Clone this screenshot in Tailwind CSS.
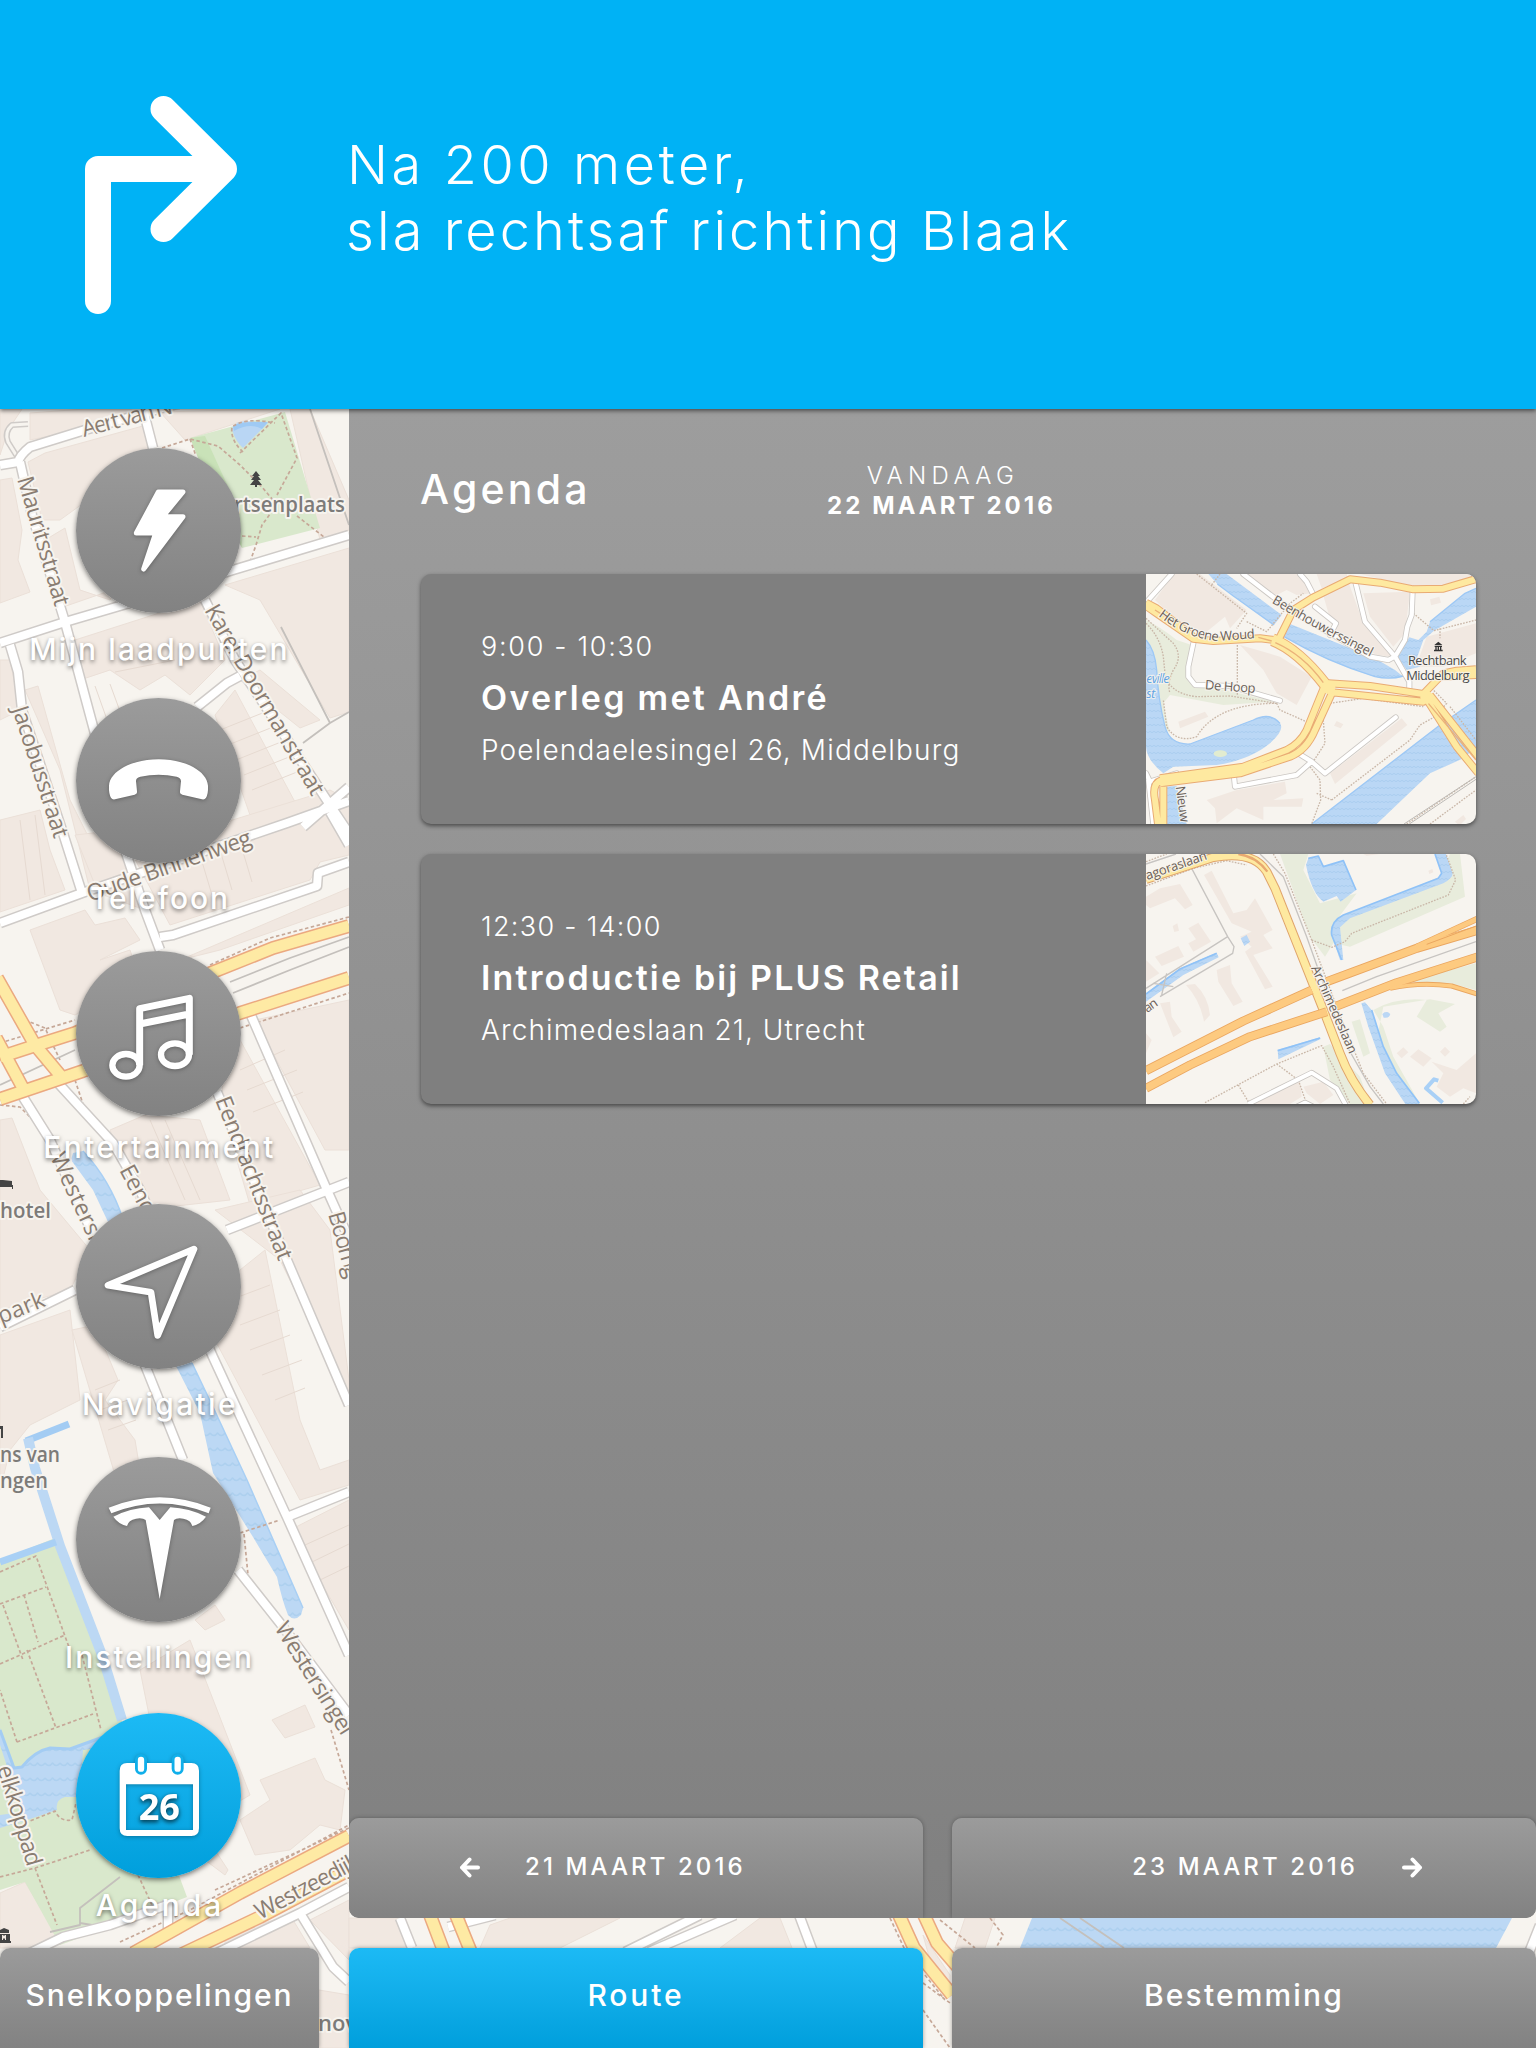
<!DOCTYPE html>
<html lang="nl">
<head>
<meta charset="utf-8">
<title>Agenda</title>
<script src="https://cdn.jsdelivr.net/npm/@tailwindcss/browser@4"></script>
</head>
<body class="bg-[#f7f4ef]">
<div class="relative w-[1536px] h-[2048px] overflow-hidden flex flex-col text-white font-['Inter',sans-serif]">

  <!-- street map -->
  <svg class="absolute inset-0 w-full h-full" viewBox="0 0 1536 2048" fill="none" stroke-linecap="butt" stroke-linejoin="round" font-family="Open Sans, Noto Sans, sans-serif">
    <defs>
      <pattern id="w" width="15" height="15" patternUnits="userSpaceOnUse"><rect width="15" height="15" fill="#bcd8f4"/><path d="M0 8q4 5 7.500 0q4 5 7.500 0" stroke="#add0ef" stroke-width="1.500"/></pattern>
      <g id="streets">
        <path d="M0 465 18 462Q20 455 30 447L85 430 180 403"/>
        <path d="M143 409 153 448M20 462 32 515 65 622 98 745 125 850 145 910 160 950M0 643 65 622 123 605 233 570 349 535M10 645 18 672 22 710 62 830 82 893 0 923M82 893 287 823 349 801M205 600 235 660 330 805 360 850M197 707 227 683 240 676M160 937 173 935 317 886 318 873 349 862M330 812 349 845M303 827 349 787"/>
        <path d="M250 1013 327 1190 345 1230M349 1182 227 1230M217 1092 287 1260 349 1405M58 1083 113 1143 140 1190 213 1357 287 1517 349 1655M23 1097 50 1140 100 1250 147 1370 183 1460M0 1327 75 1290M287 1517 349 1492M238 1570 280 1623 349 1715M30 1953 63 1937 110 1925 167 1905M168 1900V1930M217 1953 300 1913 349 1887M300 1913 333 1967 349 1982"/>
        <path d="M400 1918 412 1948M448 1927 495 1915M625 1952 700 1915M649 1952 735 1915M798 1912 813 1952M1526 1960 1540 1925"/>
      </g>
      <path id="avenues" d="M0 1099 83 1071 240 1013 349 978M0 1057 37 1045 75 1033 213 972 273 948 349 926M-3 978 35 1045 60 1075M-4 1038 24 1090M133 1953 240 1893 349 1836M180 1955 260 1917 349 1870M430 1915 444 1952M456 1915 471 1952M899 1915 914 1948 952 1995M924 1915 937 1943 962 1972"/>
    </defs>
    <!-- buildings -->
    <g fill="#f1e8e1" stroke="#ebe0d8" stroke-width="1">
      <path d="M28 462 45 453 150 424 150 455 60 520 42 520zM0 409h22L8 430 0 455zM30 413 85 409 180 409 30 440z"/>
      <path d="M160 412 280 409 185 440zM0 480 12 478 22 530 18 560 30 592 0 603z"/>
      <path d="M45 540 65 528 80 590 110 600 118 588 66 606zM290 409 310 409 349 500 349 530 320 540z"/>
      <path d="M225 585 349 548 349 712 330 718 260 600z"/>
      <path d="M75 640 200 600 225 660 190 695 165 675 140 690 110 670 80 680zM0 660 10 660 20 710 0 720z"/>
      <path d="M25 690 38 686 70 800 95 850 140 890 145 910 90 890 60 770z"/>
      <path d="M215 715 235 690 310 830 290 860 250 815zM240 680 260 670 320 720 300 728z"/>
      <path d="M0 820 40 810 50 850 65 890 0 912zM75 835 120 830 130 870 95 885z"/>
      <path d="M130 850 200 830 330 790 349 800 349 855 320 862 310 880 170 925z"/>
      <path d="M30 930 85 910 95 925 125 918 140 940 100 960 130 950 140 980 75 1015 60 1010z"/>
      <path d="M180 960 349 888 349 905 220 950zM255 1020 349 1000 349 1150 325 1150z"/>
      <path d="M220 1060 240 1040 320 1185 250 1205 225 1120zM110 1130 145 1115 200 1120 230 1200 140 1210z"/>
      <path d="M0 1120 12 1118 40 1190 90 1250 70 1290 0 1310zM0 1335 70 1310 80 1400 30 1425 10 1450 0 1490z"/>
      <path d="M72 1330 95 1325 118 1380 105 1400 135 1440 140 1470 115 1475z"/>
      <path d="M215 1210 300 1190 330 1230 349 1380 349 1400 280 1260zM240 1270 265 1250 300 1420 320 1470 349 1460 349 1485 300 1500 215 1340z"/>
      <path d="M290 1530 349 1500 349 1630zM195 1620 215 1605 225 1620 205 1630z"/>
      <path d="M140 1670 190 1640 250 1795 190 1830 150 1720z"/>
      <path d="M272 1720 305 1705 315 1727 285 1738zM260 1780 315 1758 325 1780 345 1790 340 1830 320 1825 290 1850 255 1855 240 1820 270 1800z"/>
      <path d="M215 1850 228 1870 225 1875 205 1860zM225 1935 290 1915 310 1948 225 1948zM310 1920 349 1900 349 1960z"/>
      <path d="M0 1893 25 1882 57 1935 30 1948 0 1948zM319 1990 349 1995 349 2048 319 2048z"/>
      <path d="M349 1918h48l12 30H349zM490 1925 510 1918 620 1918 560 1948 480 1948zM720 1948 760 1918 780 1918 792 1948zM965 1918h30l-10 30h-30zM923 1935 950 1975 950 1985 930 1960z"/>
    </g>
    <path d="M80 690l25 70M95 686l25 70M110 684l22 60M220 730l50-20M228 745l50-20M236 760l50-20M244 775l50-20M252 790l50-20M20 820l10 80M35 815l10 80M240 1070l45-20M247 1090l50-20M253 1112l50-20M150 1120l35 80M165 1120l35 80M230 1300l40-15M240 1325l40-15M250 1350l40-15M262 1375l40-15M275 1400l30-12M95 1390l25-10M100 1410l28-10M108 1430l28-10M305 1545l44-20M312 1562l37-18M320 1580l29-14M175 660l-60 12M200 855l12 40M220 850l12 40M240 842l12 40" stroke="#e6dad1"/>
    <!-- parks and water -->
    <path d="M190 438 285 412 320 528 242 548 230 490z" fill="#d9e8cc"/>
    <path d="M190 438 205 436 225 480 240 510 242 548 215 500z" fill="#c9e2b8"/>
    <path d="M232 430Q232 423 245 421L268 423 243 448Q236 442 232 430z" fill="#b9d6f4"/>
    <path d="M233 426Q240 421 268 422L262 429Q250 422 234 431z" fill="#9fcaf4"/>
    <path d="M0 1560 55 1538 60 1543 125 1730 187 1897 110 1927 60 1945 25 1882 0 1890z" fill="#d9e8cc"/>
    <path d="M0 1728 13 1767 22 1767Q32 1752 50 1748L70 1749 103 1736 98 1748 83 1750 80 1797 65 1797Q55 1800 57 1810L27 1820 0 1828V1815L22 1812 0 1745z" fill="url(#w)"/>
    <path d="M0 1730 14 1768 22 1767Q35 1751 50 1748L70 1749 103 1737" stroke="#a3ccf3" stroke-width="3"/>
    <path d="M73 1153 83 1151Q110 1180 123 1219L150 1290 192 1363 213 1407 247 1480 303 1608 301 1615Q294 1622 288 1615 282 1600 277 1577L253 1537 213 1473 200 1413 177 1368 140 1290 93 1190 71 1160z" fill="url(#w)"/>
    <path d="M83 1151Q110 1180 123 1219M192 1363 213 1407 247 1480 303 1608" stroke="#a8cff4" stroke-width="1.500"/>
    <path d="M69 1424 26 1441" stroke="#a3ccf3" stroke-width="7"/>
    <path d="M28 1438 35 1468 60 1546 102 1655 122 1720" stroke="#bcd8f4" stroke-width="10"/>
    <path d="M0 1562 56 1542" stroke="#a9d0f5" stroke-width="7"/>
    <path d="M1032 1918H1512L1496 1948H1020z" fill="url(#w)"/>
    <!-- footpaths -->
    <path d="M162 448 190 439 218 446 240 465 262 487 273 500M190 439 196 456M240 453 281 413 297 458 277 495M243 452Q230 440 232 427 245 417 275 423M273 510 262 525 256 545 250 562M242 536 256 537M297 516 324 537M210 965 270 938 349 917M240 1028 290 1012 349 993M0 1043 75 1020M25 1020 45 1028 60 1060M75 1080 85 1110M0 1105 20 1107 38 1125M0 1572 36 1556 70 1650M0 1604 46 1587M24 1595 38 1642M3 1605 23 1660M0 1664 65 1635M27 1650 56 1728M17 1742 0 1690M17 1742 93 1714M82 1655 101 1730M25 1823 55 1811Q60 1822 72 1820L76 1803M0 1877 35 1868 90 1850M35 1868 57 1925M138 1875 152 1905M240 1533 280 1520M244 1534 248 1575M331 1730 349 1790M120 1942 190 1910 349 1825M215 1890 349 1828M890 1918 905 1950M940 1920 975 1948M923 2010 950 2048M925 1975 945 2000M923 1983 950 2003M990 1918 1003 1935 996 1948" stroke="#c6a898" stroke-width="1.700" stroke-dasharray="3.500 2.500"/>
    <!-- rails and lanes -->
    <path d="M281 627 330 723 349 712M330 723 303 743M310 409 349 525M0 1085 75 1050M230 982 290 958 349 937M233 993 290 970 349 947M120 1877 80 1908V1925L50 1932M80 1923 110 1928M1060 1918 1104 1948M1080 1918 1124 1948" stroke="#c4c0bc" stroke-width="1.800"/>
    <path d="M28 424 12 425Q4 432 8 442L18 458" stroke="#cfcbc8" stroke-width="6"/>
    <path d="M28 424 12 425Q4 432 8 442L18 458" stroke="#f7f4ef" stroke-width="3"/>
    <!-- roads -->
    <use href="#streets" stroke="#cfcbc8" stroke-width="11"/>
    <use href="#streets" stroke="#fff" stroke-width="8"/>
    <use href="#avenues" stroke="#eba980" stroke-width="14"/>
    <use href="#avenues" stroke="#feeaa4" stroke-width="11"/>
    <!-- map labels -->
    <g font-size="23" fill="#8a7d72" stroke="#f7f4ef" stroke-width="4" paint-order="stroke">
      <text transform="translate(84 437) rotate(-15)" textLength="93">Aert van N</text>
      <text transform="translate(17 479) rotate(73.500)" textLength="134">Mauritsstraat</text>
      <text transform="translate(204 610) rotate(60)" textLength="216">Karel Doormanstraat</text>
      <text transform="translate(12 709) rotate(72)" textLength="137">Jacobusstraat</text>
      <text transform="translate(90 902) rotate(-19.500)" textLength="173">Oude Binnenweg</text>
      <text transform="translate(215 1100) rotate(68.500)" textLength="174">Eendrachtsstraat</text>
      <text transform="translate(50 1157) rotate(65)" textLength="140">Westersingel</text>
      <text transform="translate(119 1170) rotate(62)" textLength="160">Eendrachtsweg</text>
      <text transform="translate(328 1214) rotate(74)" textLength="68">Boomg</text>
      <text transform="translate(1 1324) rotate(-22)" textLength="49">park</text>
      <text transform="translate(274 1628) rotate(58)" textLength="128">Westersingel</text>
      <text transform="translate(-3 1768) rotate(73)" textLength="104">elkkoppad</text>
      <text transform="translate(260 1920) rotate(-28)" textLength="115">Westzeedijk</text>
    </g>
    <g font-size="22" fill="#7d7b79" stroke="#f7f4ef" stroke-width="4" paint-order="stroke" font-weight="600">
      <text x="234" y="512" textLength="111" lengthAdjust="spacingAndGlyphs">rtsenplaats</text>
      <text x="0" y="1218" textLength="51" lengthAdjust="spacingAndGlyphs">hotel</text>
      <text x="0" y="1462" textLength="60" lengthAdjust="spacingAndGlyphs">ns van</text>
      <text x="0" y="1488" textLength="48" lengthAdjust="spacingAndGlyphs">ngen</text>
      <text x="318" y="2031">nov</text>
    </g>
    <g fill="#444">
      <path d="M256 471l4 5h-2l3 4h-3l4 5h-5v2h-2v-2h-5l4-5h-3l3-4h-2z"/>
      <path d="M0 1180h3l9 1v5H0zM0 1185h13v4h-1v-2H0zM0 1426h3v12H1v-9H0z"/>
      <path fill-rule="evenodd" d="M0 1930l4-2 5 2v3H0zM0 1934h10v7h1v2H0zM2 1940h1v-2l1 1 1-1v2h1v-5H5l-1 1-1-1H2z"/>
    </g>
  </svg>

  <!-- route instruction -->
  <header class="relative z-20 h-[409px] shrink-0 bg-[#00b2f5] shadow-[0_2px_4px_rgba(0,0,0,0.5)] flex items-start">
    <div class="w-[345px] pt-[95px] pl-[85px]">
      <svg class="w-[153px] h-[219px]" viewBox="85 95 153 219" fill="none" stroke="#fff" stroke-width="26" stroke-linecap="round" stroke-linejoin="round"><path d="M98 301V169H224M163.500 109 224 169 163.500 229"/></svg>
    </div>
    <p class="pt-[132px] text-[54px] leading-[66px] font-[340] whitespace-nowrap"><span class="tracking-[3.6px] pl-[2px]">Na 200 meter,</span><br><span class="tracking-[3.1px] pl-px">sla rechtsaf richting Blaak</span></p>
  </header>

  <div class="relative flex-1 flex min-h-0">
    <!-- shortcuts -->
    <nav class="w-[349px] shrink-0 pt-[39px]">
      <ul class="w-[317px] flex flex-col items-center text-[30px] leading-[36px] font-medium [text-shadow:0_2px_4px_rgba(0,0,0,0.5)]">
        <li class="h-[250px] flex flex-col items-center">
          <div class="size-[165px] rounded-full bg-linear-to-b from-[#9b9b9b] to-[#828282] shadow-[0_2px_5px_rgba(0,0,0,0.5)]">
            <svg class="size-full drop-shadow-[0_1px_2px_rgba(0,0,0,0.3)]" viewBox="228 144 495 495"><path d="M475 276H549L488 350H549L431 507 467 399H409z" fill="#fff" stroke="#fff" stroke-width="15" stroke-linejoin="round"/></svg>
          </div>
          <span class="mt-[18px] pl-[2px] tracking-[2.1px]">Mijn laadpunten</span>
        </li>
        <li class="h-[253px] flex flex-col items-center">
          <div class="size-[165px] rounded-full bg-linear-to-b from-[#9b9b9b] to-[#828282] shadow-[0_2px_5px_rgba(0,0,0,0.5)]">
            <svg class="size-full drop-shadow-[0_1px_2px_rgba(0,0,0,0.3)]" viewBox="228 895 495 495"><path d="M327 1158C330 1115 395 1079 476 1079S621 1115 624 1158Q625 1182 618 1194 614 1201 606 1199L547 1185Q539 1183 540 1175L543 1145Q543 1134 530 1131 476 1120 421 1131 407 1134 408 1145L411 1175Q412 1183 404 1185L345 1199Q337 1201 333 1194 326 1182 327 1158z" fill="#fff"/></svg>
          </div>
          <span class="mt-[17px] pl-[3px] tracking-[1.9px]">Telefoon</span>
        </li>
        <li class="h-[253px] flex flex-col items-center">
          <div class="size-[165px] rounded-full bg-linear-to-b from-[#9b9b9b] to-[#828282] shadow-[0_2px_5px_rgba(0,0,0,0.5)]">
            <svg class="size-full drop-shadow-[0_1px_2px_rgba(0,0,0,0.3)]" viewBox="228 393 495 495" fill="none" stroke="#fff" stroke-width="21" stroke-linejoin="round"><path d="M419 736V566L568 535V704M419 612 568 582"/><ellipse cx="378" cy="736" rx="41" ry="34" stroke-width="19"/><ellipse cx="525" cy="704" rx="42" ry="34" stroke-width="19"/></svg>
          </div>
          <span class="mt-[13px] pl-[2px] tracking-[2.4px]">Entertainment</span>
        </li>
        <li class="h-[253px] flex flex-col items-center">
          <div class="size-[165px] rounded-full bg-linear-to-b from-[#9b9b9b] to-[#828282] shadow-[0_2px_5px_rgba(0,0,0,0.5)]">
            <svg class="size-full drop-shadow-[0_1px_2px_rgba(0,0,0,0.3)]" viewBox="228 -108 495 495" fill="none" stroke="#fff" stroke-width="20" stroke-linejoin="round"><path d="M582 27 324 136 453 157 473 286z"/></svg>
          </div>
          <span class="mt-[17px] pl-[3px] tracking-[2.3px]">Navigatie</span>
        </li>
        <li class="h-[256px] flex flex-col items-center">
          <div class="size-[165px] rounded-full bg-linear-to-b from-[#9b9b9b] to-[#828282] shadow-[0_2px_5px_rgba(0,0,0,0.5)]">
            <svg class="size-full drop-shadow-[0_1px_2px_rgba(0,0,0,0.3)]" viewBox="228 651 495 495" fill="#fff"><path d="M326 803Q479 740 632 803L626 820Q479 761 334 820zM340 830Q390 805 447 802L479 840 511 802Q568 805 618 830 603 852 577 858 573 840 550 836 530 833 522 840L479 1077 437 840Q428 833 408 836 385 840 381 858 355 852 340 830z"/></svg>
          </div>
          <span class="mt-[17px] pl-[2px] tracking-[2px]">Instellingen</span>
        </li>
        <li class="flex flex-col items-center">
          <div class="size-[165px] rounded-full bg-linear-to-b from-[#1cbaf5] to-[#009fdc] shadow-[0_2px_5px_rgba(0,0,0,0.5)]">
            <svg class="size-full drop-shadow-[0_1px_2px_rgba(0,0,0,0.3)]" viewBox="228 219 495 495"><path fill-rule="evenodd" fill="#fff" d="M381 369H574Q597 369 597 392V565Q597 588 574 588H382Q359 588 359 565V392Q359 369 381 369zM378 433V570H579V433z"/><path d="M423 360V386M533 360V386" stroke="#10afea" stroke-width="36" stroke-linecap="round"/><path d="M423 360V386M533 360V386" stroke="#fff" stroke-width="19" stroke-linecap="round"/><text x="478" y="540" text-anchor="middle" textLength="124" lengthAdjust="spacingAndGlyphs" font-family="Open Sans, sans-serif" font-weight="700" font-size="105" fill="#fff">26</text></svg>
          </div>
          <span class="mt-[9px] pl-[3px] tracking-[2.9px]">Agenda</span>
        </li>
      </ul>
    </nav>

    <!-- agenda panel -->
    <main class="flex-1 h-[1509px] flex flex-col rounded-b-[10px] overflow-hidden bg-linear-to-b from-[#9d9d9d] to-[#808080]">
      <div class="grid grid-cols-[1fr_auto_1fr] h-[165px] shrink-0">
        <h1 class="pt-[56px] pl-[71px] text-[41px] leading-[48px] font-medium tracking-[3.2px]">Agenda</h1>
        <div class="pt-[52px] -ml-[3px] flex flex-col items-center text-[24px] leading-[30px]">
          <span class="font-[340] tracking-[5.3px] pl-[4px]">VANDAAG</span>
          <span class="font-bold tracking-[3.05px] pl-px">22 MAART 2016</span>
        </div>
      </div>

      <section class="pl-[72px] pr-[60px] flex flex-col gap-[30px]">
        <article class="h-[250px] flex rounded-[10px] overflow-hidden bg-[#7f7f7f] shadow-[0_2px_4px_rgba(0,0,0,0.5)]">
          <div class="flex-1 pt-[48px] pl-[60px] whitespace-nowrap font-[340]">
            <p class="text-[27px] leading-[50px] tracking-[1.7px]">9:00 - 10:30</p>
            <h2 class="-mt-px text-[34px] leading-[54px] font-semibold tracking-[2.27px]">Overleg met André</h2>
            <p class="text-[28px] leading-[50px] tracking-[1.15px]">Poelendaelesingel 26, Middelburg</p>
          </div>
          <svg class="w-[330px] h-[250px] shrink-0 bg-[#f7f4ef]" viewBox="48 42 990 750" fill="none" stroke-linejoin="round" font-family="Open Sans, Noto Sans, sans-serif">
            <defs>
              <pattern id="w3" width="24" height="42" patternUnits="userSpaceOnUse"><rect width="24" height="42" fill="#bad7f5"/><path d="M0 10q6 8 12 0q6 8 12 0M0 31q6 8 12 0q6 8 12 0" stroke="#abceef" stroke-width="3"/></pattern>
              <path id="lanes" d="M55 120 125 42M340 42 480 150 720 290 775 300 795 290M510 42 530 65 548 100M555 140 618 190 600 225M677 70 705 185 795 290 838 365V385M848 90 845 165 832 200 825 240 795 290M190 250 175 320V350L195 375 300 378 450 422M545 605 585 640 797 472M488 570 545 605 500 645 315 680 312 650M55 660 70 792M48 640 60 665 140 640"/>
              <g id="mains">
                <path d="M445 240 490 150 550 112 660 58 750 68 850 88 940 86 1045 55M595 370 720 378 880 402 940 340 980 332 1038 328M605 397 880 425 900 400M930 350 1040 345M885 410 980 560 1045 640M900 405 1045 590M585 375 530 510Q510 550 470 570L340 620 90 655M610 390 555 510Q530 570 480 590L330 640 90 670M95 660Q65 670 75 720L85 800M100 680 100 800"/>
                <path d="M48 138 80 160 190 236 250 243 390 235 435 240M48 128 80 145 190 230M430 232Q510 265 590 368M425 246Q500 275 582 380"/>
              </g>
            </defs>
            <g fill="#f1e8e1">
              <path d="M130 42H210L350 150 300 205 285 170 230 215 160 205 75 120zM350 42H520L545 100 500 105 470 90 430 110zM560 42H650L655 55 575 85zM690 42H1038V55L930 80 850 80zM575 90 655 65 700 190 790 290 740 285 610 210zM700 100 840 95 825 220 790 260 720 170zM600 640 815 475 832 495 615 672zM330 255 450 290 545 350 500 435 440 400 400 330zM865 300 890 230 1038 190V280L940 320 870 320zM230 720 320 690 465 665 470 700 430 720 520 715 515 740 400 740 400 780 320 745 260 790 255 745zM145 485 225 455 235 470 150 505zM900 118l28-8 5 18-30 8zM975 785l25-20 8 12-20 20zM620 483l20 10-8 12-20-8z"/>
            </g>
            <path d="M48 180Q90 200 140 240L185 255 170 350 200 370 430 425 280 435 120 405 100 430 120 520 100 500 70 300 48 240z" fill="#e8ecdc"/>
            <g fill="url(#w3)">
              <path d="M235 42 290 42 455 165 432 195 310 108 262 72zM475 190 735 295 795 330 820 350Q780 360 735 350 590 305 462 230zM1038 85 1005 100 900 185 890 215 865 240 838 232 800 290 830 330 870 320 862 290 880 240 912 212 1038 140z"/>
              <path d="M48 240Q75 270 80 330 85 420 105 500 120 555 180 552L370 480Q420 455 450 490 465 510 420 550 360 600 260 615L130 620 100 640Q50 600 48 560zM105 680 140 678 170 792H110zM545 792 930 495 1038 420V560L1000 595 900 640 740 792z"/>
            </g>
            <path d="M262 72 310 108 432 195M462 230Q590 305 735 350 780 360 820 348M48 240Q75 270 80 330 85 420 105 500 120 555 180 552L370 480Q420 455 450 490M545 792 930 495 1038 420M900 185 1005 100 1038 85" stroke="#9dc8f5" stroke-width="4"/>
            <ellipse cx="271" cy="581" rx="20" ry="10" fill="#e2ecd0"/>
            <path d="M200 42 350 160 320 205M270 42 245 75M48 190Q90 230 100 290L105 340Q115 400 200 410L300 408 440 430M48 175 130 250Q160 290 130 330 110 370 120 400M322 255V405M440 430Q260 430 200 530 140 550 110 500L100 420M440 430 450 450 540 490M350 185 410 215 480 130 520 100M540 620 570 660 572 720 545 792M605 720 840 540 870 495 915 470 950 430 900 380 940 350M560 700 605 720M580 480 585 550 540 620M850 160 912 212 1038 180M930 205V235M960 440 1038 540M830 792 1038 650M900 792 1038 690M600 430 700 415 880 440" stroke="#c9b7a8" stroke-width="4" stroke-dasharray="5 4"/>
            <use href="#lanes" stroke="#cbc7c3" stroke-width="18" stroke-linecap="round"/>
            <use href="#lanes" stroke="#fff" stroke-width="13" stroke-linecap="round"/>
            <use href="#mains" stroke="#e9ab74" stroke-width="24"/>
            <use href="#mains" stroke="#fee9a0" stroke-width="18"/>
            <path d="M436 248Q520 285 580 368M385 232 425 243M895 430 1038 600M75 150 110 172" stroke="#eab27a" stroke-width="4"/>
            <circle cx="596" cy="382" r="20" fill="#fee9a0"/><circle cx="890" cy="412" r="19" fill="#fee9a0"/>
            <path d="M822 792 1038 650M838 792 1038 658" stroke="#bdbab6" stroke-width="3"/>
            <defs><path id="hg" d="M85 168Q170 235 260 243L400 233"/><path id="bh" d="M425 128Q570 215 745 302"/></defs>
            <g font-size="39" fill="#6a6058" stroke="#f7f4ef" stroke-opacity=".8" stroke-width="7" paint-order="stroke">
              <text textLength="308"><textPath href="#hg">Het Groene Woud</textPath></text>
              <text textLength="338"><textPath href="#bh">Beenhouwerssingel</textPath></text>
              <text transform="translate(224 388) rotate(4)" textLength="152">De Hoop</text>
              <text transform="translate(137 680) rotate(82)" textLength="109">Nieuw</text>
              <text x="922" y="316" text-anchor="middle" textLength="176" fill="#4a4a4a">Rechtbank</text>
              <text x="924" y="359" text-anchor="middle" textLength="190" fill="#4a4a4a">Middelburg</text>
              <text x="49" y="370" textLength="70" font-style="italic" fill="#5fa3e3">eville</text>
              <text x="49" y="415" textLength="27" font-style="italic" fill="#5fa3e3">st</text>
            </g>
            <path d="M913 255 925 245 937 255zM914 257h22v4h-22zM916 261h4v8h-4zM923 261h4v8h-4zM930 261h4v8h-4zM912 269h26v5h-26z" fill="#333"/>
          </svg>
        </article>

        <article class="h-[250px] flex rounded-[10px] overflow-hidden bg-[#7f7f7f] shadow-[0_2px_4px_rgba(0,0,0,0.5)]">
          <div class="flex-1 pt-[48px] pl-[60px] whitespace-nowrap font-[340]">
            <p class="text-[27px] leading-[50px] tracking-[1.3px]">12:30 - 14:00</p>
            <h2 class="-mt-px text-[34px] leading-[54px] font-semibold tracking-[2.15px]">Introductie bij PLUS Retail</h2>
            <p class="text-[28px] leading-[50px] tracking-[1.1px]">Archimedeslaan 21, Utrecht</p>
          </div>
          <svg class="w-[330px] h-[250px] shrink-0 bg-[#f7f4ef]" viewBox="48 42 990 750" fill="none" stroke-linejoin="round" font-family="Open Sans, Noto Sans, sans-serif">
            <defs>
              <path id="avenue" d="M48 118 250 52Q370 30 410 95L435 145 580 510 630 640Q660 720 720 795"/>
              <path id="motorway" d="M48 692 340 543 545 450M590 425 860 325 1045 270M48 745 180 675 360 590 590 515M620 498 800 428 1045 350"/>
              <path id="estate" d="M355 792 545 698 620 745 650 800M500 800 525 788 550 800"/>
            </defs>
            <g fill="#f1e8e1">
              <path d="M48 170 90 145 150 132 188 195 165 208 135 175 60 205 48 195zM222 105 245 92 310 220 350 210 375 175 428 270 400 285 428 325 370 345 428 440 405 448 345 335 365 320 330 290 365 275 305 250zM175 265 205 248 243 305 190 335 175 310 198 298zM75 350 145 318 162 350 95 378zM48 360 88 400 48 425zM128 258l14-8 5 22-14 4zM260 390 300 375 305 430 338 485 310 498 265 425zM168 435 195 432Q235 470 240 525L222 545Q210 480 168 435zM90 490 120 485 125 530 155 575 130 592zM48 580 65 600 48 640zM410 770 440 740 510 725 515 770 480 792 375 792zM520 740 580 725 610 765 570 792 530 760zM800 640l20-18 15 15-20 18zM840 650 865 628 905 655 880 680zM905 665 980 690 1038 640V760L1000 745 960 770 920 740 940 700zM930 635l15-15 15 15-15 15zM700 42h50l-40 5zM895 92l12-5 3 10-12 5z"/>
            </g>
            <g fill="#e8ecdc">
              <path d="M450 42H535L520 90 570 190 680 160 620 240 640 230 930 110 960 42H990L1005 170 660 320 610 310 585 350 540 290zM1038 370 830 425 960 430 1038 450zM730 510Q800 470 890 480L860 530 930 575 950 560 925 520 975 492 900 478 760 500 740 600 840 792H870L790 650 760 560zM580 620 600 612 690 710 720 792H660L600 720zM665 545 690 538 720 640 700 650z"/>
            </g>
            <g fill="url(#w3)">
              <path d="M535 55 565 48 580 80 640 62 678 150 632 185 620 168 580 185Q545 160 528 75z"/>
              <path d="M915 42H948L968 100Q968 115 940 130L660 235 630 262 640 360 630 360 605 285Q600 245 640 225L925 115 935 100zM332 295 350 285 360 305 343 318zM48 460 150 385 260 338 266 352 160 405 48 485zM443 630 570 592 572 597 445 658zM694 490 705 487 725 510 760 620 800 700 868 792H826L765 700 715 560zM757 522q12-12 24 0q-4 14-20 11z"/>
            </g>
            <path d="M915 42 935 100 925 115 640 225Q600 245 605 285L635 360M535 55 565 48 580 80 640 62 678 150M48 462 150 387 260 340M443 632 570 594M725 510 760 620 800 700 868 790" stroke="#8fc2f7" stroke-width="5"/>
            <path d="M925 722 912 718 888 745 938 788" stroke="#a9d0f6" stroke-width="12"/>
            <path d="M430 42 465 100 545 300 620 500 700 700 770 792M545 300 605 322 645 305 665 280 955 165 977 120 948 42M48 138 190 85 290 62 350 75M225 788 440 672 575 617 610 680 660 792M325 735 355 785M440 672 505 720 530 792M48 65 110 42M1000 792 1020 770" stroke="#c9b7a8" stroke-width="4" stroke-dasharray="5 4"/>
            <path d="M390 42 460 110 530 290 640 600 720 740 760 792M185 85 293 290 312 320 308 340 90 470M48 445 293 290M48 72 138 42M637 452 740 410 1038 305M70 430 130 440M110 400 95 465" stroke="#c7c4c1" stroke-width="4"/>
            <use href="#estate" stroke="#c9c5c1" stroke-width="17"/>
            <use href="#estate" stroke="#fff" stroke-width="12"/>
            <use href="#avenue" stroke="#e0a56c" stroke-width="28"/>
            <use href="#avenue" stroke="#fee9a0" stroke-width="22"/>
            <path d="M325 42Q380 50 412 95" stroke="#e8a870" stroke-width="7"/>
            <g stroke="#eaa660">
              <use href="#motorway" stroke-width="27"/><path stroke-width="18" d="M860 320 1045 235"/><path stroke-width="15" d="M780 445Q870 425 965 438L1045 463"/>
            </g>
            <g stroke="#fdca80">
              <use href="#motorway" stroke-width="22"/><path stroke-width="14" d="M860 320 1045 235"/><path stroke-width="10" d="M780 445Q870 425 965 438L1045 463"/>
            </g>
            <path d="M890 313 1038 258" stroke="#eaa660" stroke-width="3"/>
            <g font-size="39" fill="#6a6058" stroke="#f7f4ef" stroke-opacity=".85" stroke-width="7" paint-order="stroke">
              <text transform="translate(52 120) rotate(-19)" textLength="192">agoraslaan</text>
              <text transform="translate(52 519) rotate(-35)" textLength="42">an</text>
              <text transform="translate(543 384) rotate(66)" textLength="284">Archimedeslaan</text>
            </g>
          </svg>
        </article>
      </section>

      <div class="mt-auto flex gap-[29px] text-[24px] leading-[30px] font-medium">
        <button class="w-[574px] h-[100px] rounded-t-[10px] rounded-bl-[10px] pl-[110px] pb-[2px] flex items-center bg-linear-to-b from-[#9b9b9b] to-[#828282] shadow-[0_0_4px_rgba(0,0,0,0.3)]">
          <svg class="w-[22px] h-[21px]" viewBox="0 0 22 21" fill="none" stroke="#fff" stroke-width="4" stroke-linecap="round" stroke-linejoin="round"><path d="M19 10.500H3M10.500 2.500 3 10.500 10.500 18.500"/></svg>
          <span class="ml-[44px] tracking-[3.1px]">21 MAART 2016</span>
        </button>
        <button class="flex-1 h-[100px] rounded-[10px] rounded-bl-none pr-[113px] pb-[2px] flex items-center justify-end bg-linear-to-b from-[#9b9b9b] to-[#828282] shadow-[0_0_4px_rgba(0,0,0,0.3)]">
          <span class="tracking-[3.1px]">23 MAART 2016</span>
          <svg class="ml-[43px] w-[22px] h-[21px]" viewBox="0 0 22 21" fill="none" stroke="#fff" stroke-width="4" stroke-linecap="round" stroke-linejoin="round"><path d="M3 10.500H19M11.500 2.500 19 10.500 11.500 18.500"/></svg>
        </button>
      </div>
    </main>
  </div>

  <!-- bottom tabs -->
  <footer class="absolute bottom-0 inset-x-0 h-[100px] flex text-[30px] leading-[36px] font-medium">
    <button class="w-[319px] mr-[30px] pb-[6px] rounded-t-[10px] bg-linear-to-b from-[#9b9b9b] to-[#828282] shadow-[0_0_4px_rgba(0,0,0,0.35)] tracking-[1.95px]">Snelkoppelingen</button>
    <button class="w-[574px] mr-[29px] pb-[6px] rounded-t-[10px] bg-linear-to-b from-[#1cbaf5] to-[#009fdc] shadow-[0_0_4px_rgba(0,0,0,0.35)] tracking-[2.9px]">Route</button>
    <button class="flex-1 pb-[6px] rounded-t-[10px] bg-linear-to-b from-[#9b9b9b] to-[#828282] shadow-[0_0_4px_rgba(0,0,0,0.35)] tracking-[2.15px]">Bestemming</button>
  </footer>
</div>
</body>
</html>
